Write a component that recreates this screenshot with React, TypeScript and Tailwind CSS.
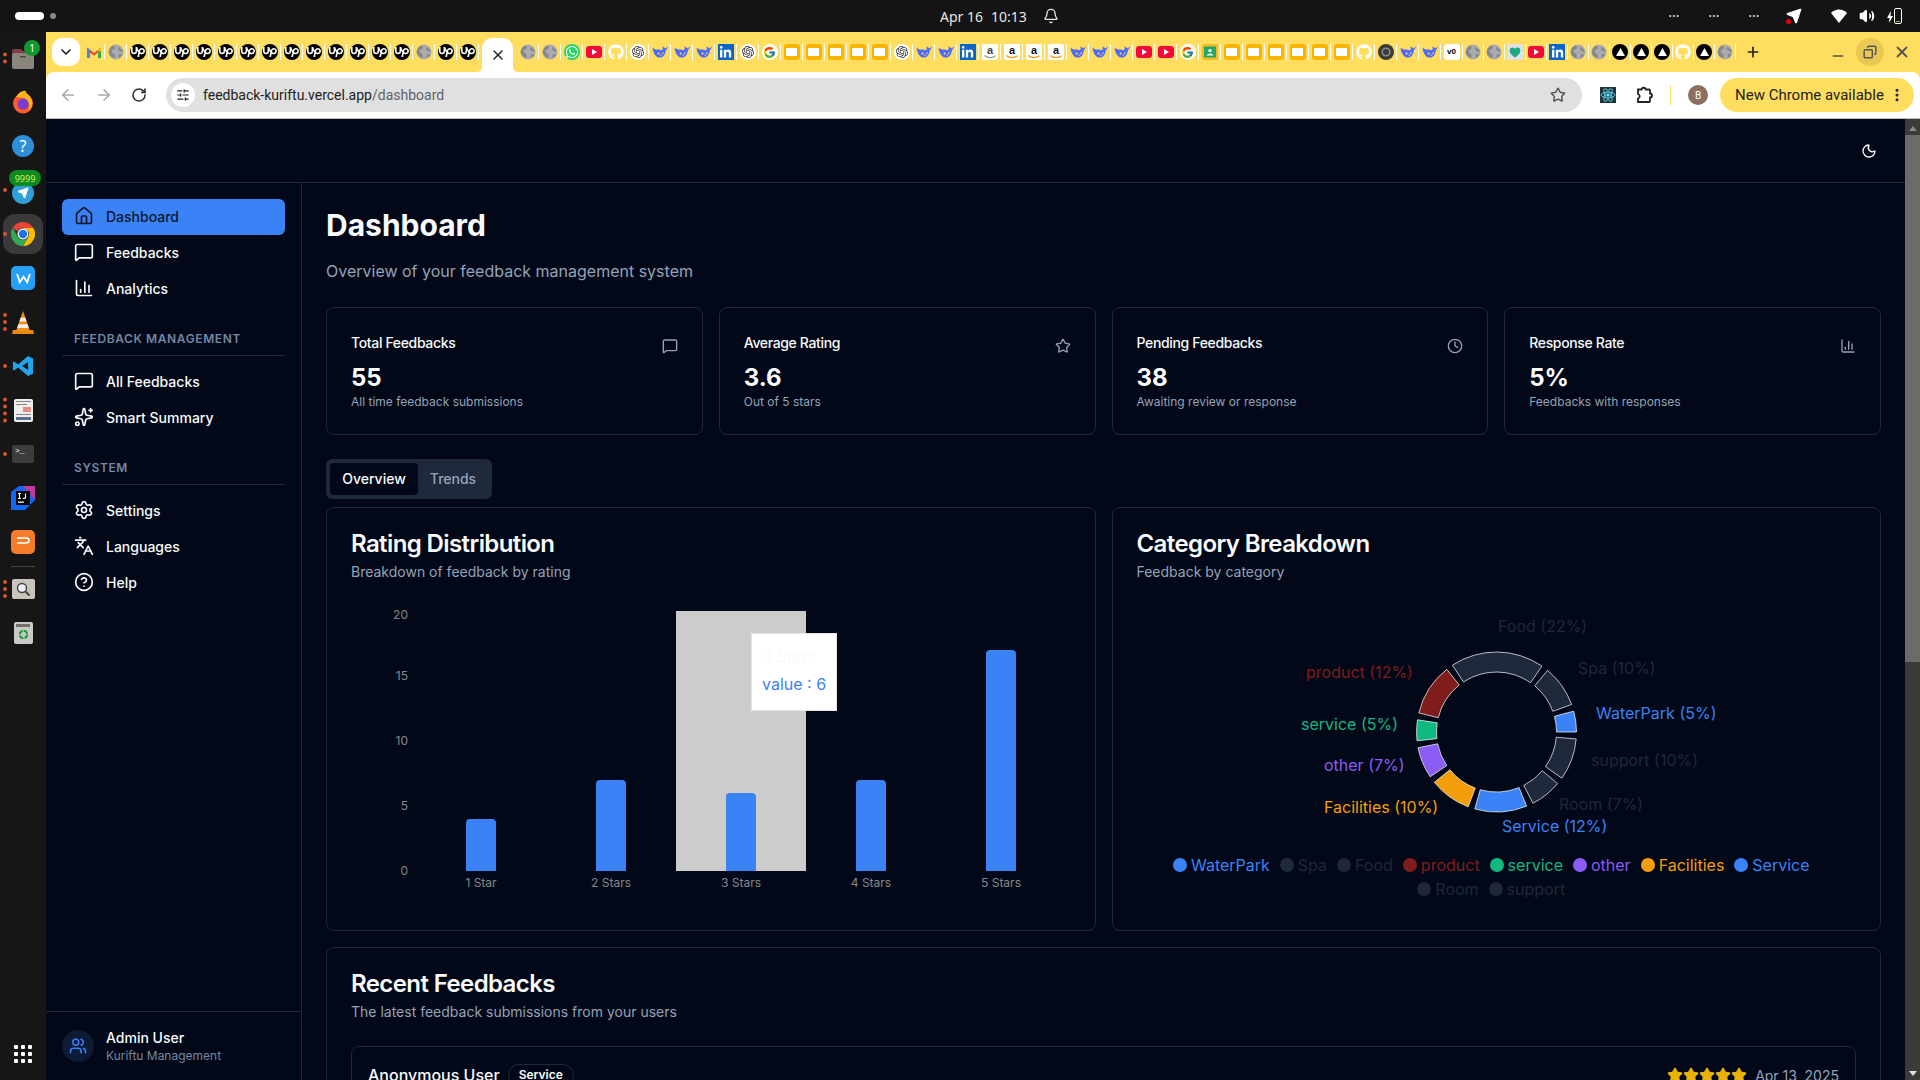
import React from 'react';
import {
  House, MessageSquare, ChartColumn, Sparkles, Settings, Languages, CircleHelp, Star, Clock, Users, Moon,
  ArrowLeft, ArrowRight, RotateCw, EllipsisVertical, Plus, Minus, X, ChevronDown, Bell, Volume2,
  Send, SlidersHorizontal, Copy,
} from 'lucide-react';
import { SiUpwork, SiOpenai } from 'react-icons/si';
import { FaWhatsapp, FaGithub, FaLinkedinIn } from 'react-icons/fa';
import { FcGoogle } from 'react-icons/fc';

type Fav = 'gmail' | 'globe' | 'up' | 'wa' | 'yt' | 'gh' | 'ai' | 'ds' | 'li' | 'g' | 'y' | 'am0' | 'am' | 'cl' | 'cd' | 'v0' | 'dash' | 'tri';

const rep = (k: Fav, n: number): Fav[] => Array.from({ length: n }, () => k);

const leftTabs: Fav[] = ['gmail', 'globe', ...rep('up', 13), 'globe', 'up', 'up'];
const rightTabs: Fav[] = [
  'globe', 'globe', 'wa', 'yt', 'gh', 'ai', ...rep('ds', 3), 'li', 'ai', 'g', ...rep('y', 5), 'ai', ...rep('ds', 2), 'li',
  'am0', 'am', 'am', 'am', ...rep('ds', 3), 'yt', 'yt', 'g', 'cl', ...rep('y', 6), 'gh', 'cd', 'ds', 'ds', 'v0', 'globe', 'globe',
  'dash', 'yt', 'li', 'globe', 'globe', 'tri', 'tri', 'tri', 'gh', 'tri', 'globe',
];

function Favicon({ kind }: { kind: Fav }) {
  switch (kind) {
    case 'gmail':
      return (
        <svg viewBox="0 0 16 16" className="h-4 w-4">
          <path d="M1 3.5 L8 9 L15 3.5 V6.5 L8 11.5 L1 6.5 Z" fill="#ea4335" />
          <path d="M1 3.5 V14 H4 V6 Z" fill="#4285f4" />
          <path d="M15 3.5 V14 H12 V6 Z" fill="#34a853" />
          <path d="M12 6 L15 3.5 V6.5 L12 8.5 Z" fill="#fbbc04" />
        </svg>
      );
    case 'globe':
      return (
        <svg viewBox="0 0 16 16" className="h-4 w-4">
          <circle cx="8" cy="8" r="7.5" fill="#a9abae" />
          <path d="M5 1.5 C8 3 7 5 5 5.5 S3 8 5 9.5 S7 11 6.5 14 C3 13 1 11 .7 8 C1 5 3 2.5 5 1.5Z M10 3 C12 3.5 14 5.5 15 8 C13 8 11 7 10 5Z M11 10 L14 10 C13.5 12 12 13.5 10.5 14 Z" fill="#84878b" />
        </svg>
      );
    case 'up':
      return (
        <span className="flex h-4 w-4 items-center justify-center rounded-full bg-black">
          <SiUpwork className="h-[14px] w-[14px] text-white" />
        </span>
      );
    case 'wa':
      return (
        <span className="flex h-4 w-4 items-center justify-center rounded-full bg-[#25d366]">
          <FaWhatsapp className="h-[14px] w-[14px] text-white" />
        </span>
      );
    case 'yt':
      return (
        <span className="flex h-3 w-4 items-center justify-center rounded-[3px] bg-[#f5083a]">
          <svg viewBox="0 0 6 6" className="h-[6px] w-[6px]"><path d="M1 0 L6 3 L1 6 Z" fill="#fff" /></svg>
        </span>
      );
    case 'gh':
      return <FaGithub className="h-4 w-4 text-white" />;
    case 'ai':
      return (
        <span className="flex h-4 w-4 items-center justify-center rounded-full bg-white">
          <SiOpenai className="h-3 w-3 text-[#333]" />
        </span>
      );
    case 'ds':
      return (
        <svg viewBox="0 0 16 16" className="h-4 w-4">
          <path d="M.5 3.5 C2 5 3.5 5.6 5.5 5.6 C7.5 5.6 8.8 6.6 10 6.2 C10.8 5 11 3.6 10.4 2.4 C11.6 2.6 12.6 3.4 13 4.4 C13.8 4.2 14.8 3.6 15.6 2.6 C15.6 4.2 14.8 5.6 13.8 6.2 C13.8 9.4 11.6 13.6 7.6 13.6 C3.6 13.6 1 9 .5 3.5 Z" fill="#4d6bfe" />
          <circle cx="6.6" cy="9.4" r="1" fill="#ffdd5e" />
          <path d="M8.5 11.5 C10 11 11 9.5 11.4 8" fill="none" stroke="#ffdd5e" strokeWidth=".9" />
        </svg>
      );
    case 'li':
      return (
        <span className="flex h-4 w-4 items-center justify-center bg-[#0a66c2]">
          <FaLinkedinIn className="h-[13px] w-[13px] text-white" />
        </span>
      );
    case 'g':
      return (
        <span className="flex h-4 w-4 items-center justify-center rounded-full bg-white">
          <FcGoogle className="h-[13px] w-[13px]" />
        </span>
      );
    case 'y':
      return (
        <span className="flex h-4 w-4 items-center justify-center rounded-[3px] bg-[#f9b400]">
          <span className="h-2 w-[11px] bg-white" />
        </span>
      );
    case 'am0':
    case 'am':
      return (
        <svg viewBox="0 0 16 16" className="h-4 w-4">
          <rect width="16" height="16" rx="2" fill="#fff" />
          <text x="8" y="10" textAnchor="middle" fontSize="11" fontWeight="700" fontFamily="Liberation Sans, sans-serif" fill={kind === 'am' ? '#111' : '#444'}>a</text>
          <path d="M2.5 11.5 C5.5 14.4 10.5 14.4 13.5 11.8" fill="none" stroke={kind === 'am' ? '#f79400' : '#999'} strokeWidth="1.3" />
        </svg>
      );
    case 'cl':
      return (
        <svg viewBox="0 0 16 16" className="h-4 w-4">
          <rect width="16" height="16" rx="2" fill="#f5bc1c" />
          <rect x="2" y="2.5" width="12" height="11" fill="#25a667" />
          <circle cx="8" cy="6.6" r="1.7" fill="#fff" />
          <path d="M4.8 11.5 C5 8.8 11 8.8 11.2 11.5 Z" fill="#fff" />
        </svg>
      );
    case 'cd':
      return (
        <svg viewBox="0 0 16 16" className="h-4 w-4">
          <circle cx="8" cy="8" r="8" fill="#3a3a3a" />
          <circle cx="8" cy="8" r="4.6" fill="#8a8a8a" />
          <circle cx="8" cy="8" r="3" fill="#3a3a3a" />
        </svg>
      );
    case 'v0':
      return (
        <span className="flex h-4 w-4 items-center justify-center rounded-[3px] bg-white font-['Liberation_Sans',sans-serif] text-[8px] font-bold leading-none text-black">v0</span>
      );
    case 'dash':
      return (
        <svg viewBox="0 0 16 16" className="h-4 w-4">
          <rect width="16" height="16" rx="2" fill="#dfe3e6" />
          <path d="M8 13.5 C3 10 2 7.5 3 5 C4.2 3 6.8 3 8 5 C9.2 3 11.8 3 13 5 C14 7.5 13 10 8 13.5 Z" fill="#1fa587" />
        </svg>
      );
    case 'tri':
      return (
        <span className="flex h-4 w-4 items-center justify-center rounded-full bg-black">
          <svg viewBox="0 0 10 9" className="h-[8px] w-[9px]"><path d="M5 0 L10 9 H0 Z" fill="#fff" /></svg>
        </span>
      );
  }
}

function TabCell({ kind, narrow }: { kind: Fav; narrow?: boolean }) {
  return (
    <div className={narrow ? 'flex h-4 w-[21px] shrink-0 items-center justify-center border-r border-white' : 'flex h-4 w-[22px] shrink-0 items-center justify-center border-r border-white'}>
      <Favicon kind={kind} />
    </div>
  );
}

function DockDots({ n }: { n: number }) {
  return (
    <span className="absolute left-[3px] top-1/2 flex -translate-y-1/2 flex-col gap-[3px]">
      {Array.from({ length: n }).map((_, i) => (
        <span key={i} className="h-[4px] w-[4px] rounded-full bg-[#d9532c]" />
      ))}
    </span>
  );
}

function DockCell({ dots = 0, children }: { dots?: number; children: React.ReactNode }) {
  return (
    <div className="relative flex h-11 w-full shrink-0 items-center justify-center">
      {dots > 0 && <DockDots n={dots} />}
      {children}
    </div>
  );
}

function Dock() {
  return (
    <aside className="flex w-[46px] shrink-0 flex-col bg-[#161616] pb-1 pt-1">
      <DockCell dots={2}>
        <svg viewBox="0 0 24 22" className="h-[22px] w-6">
          <path d="M1 4 a2 2 0 0 1 2-2 h7 l2 2 h9 a2 2 0 0 1 2 2 v3 H1Z" fill="#7c3f4a" />
          <rect x="1" y="6" width="22" height="16" rx="2" fill="#8b8580" />
          <rect x="9" y="9" width="6" height="1.5" rx=".7" fill="#4b4745" />
        </svg>
        <span className="absolute left-[24px] top-[4px] flex h-4 w-4 items-center justify-center rounded-full bg-[#12982c] font-['Noto_Sans',sans-serif] text-[10px] leading-none text-white">1</span>
      </DockCell>
      <DockCell>
        <svg viewBox="0 0 24 24" className="h-6 w-6">
          <circle cx="12" cy="13.5" r="10" fill="#ff5a2b" />
          <path d="M5 7 C8 2 12 0 15 1 C14 3 17 3 20 8 C22 12 22 18 17 21 C21 15 16 9 13 8 Z" fill="#ffb31a" />
          <circle cx="12" cy="14" r="5.5" fill="#7a3bd1" />
        </svg>
      </DockCell>
      <DockCell>
        <span className="flex h-[22px] w-[22px] items-center justify-center rounded-full bg-[#2e8fd8] font-['Noto_Sans',sans-serif] text-[16px] leading-none text-white">?</span>
      </DockCell>
      <DockCell dots={1}>
        <span className="mt-[6px] flex h-[22px] w-[22px] items-center justify-center rounded-full bg-[#2f9fd8]">
          <Send className="h-3 w-3 fill-white text-white" />
        </span>
        <span className="absolute left-[9px] top-[2px] flex h-4 w-8 items-center justify-center rounded-full bg-[#0f8a1f] font-['Noto_Sans',sans-serif] text-[9px] leading-none text-[#d6ee5a]">9999</span>
      </DockCell>
      <DockCell dots={1}>
        <span className="flex h-10 w-10 items-center justify-center rounded-xl bg-[#3a3a3a]">
          <svg viewBox="0 0 24 24" className="h-6 w-6">
            <path d="M12 0 A12 12 0 0 1 22.4 6 H12 A6 6 0 0 0 6.8 9 L1.6 6 A12 12 0 0 1 12 0Z" fill="#ea4335" />
            <path d="M22.4 6 A12 12 0 0 1 12 24 L17.2 15 A6 6 0 0 0 17.2 9 L12 6Z" fill="#fbbc04" />
            <path d="M1.6 6 A12 12 0 0 0 12 24 L17.2 15 A6 6 0 0 1 6.8 15Z" fill="#34a853" />
            <circle cx="12" cy="12" r="5.4" fill="#fff" />
            <circle cx="12" cy="12" r="4.2" fill="#1a73e8" />
          </svg>
        </span>
      </DockCell>
      <DockCell>
        <span className="flex h-6 w-6 items-center justify-center rounded-[5px] bg-[#25a0f5]">
          <svg viewBox="0 0 16 12" className="h-[11px] w-[15px]"><path d="M1 1 L4 10 L8 4 L12 10 L15 1" fill="none" stroke="#fff" strokeWidth="2" /></svg>
        </span>
      </DockCell>
      <DockCell dots={3}>
        <svg viewBox="0 0 22 24" className="h-6 w-[22px]">
          <path d="M1 20 L21 20 L22 24 H0Z" fill="#e98a12" />
          <path d="M11 1 L18 21 H4Z" fill="#f08f13" />
          <path d="M8.6 7.8 H13.4 L14.6 11.5 H7.4Z" fill="#eee" />
          <path d="M6.4 14.2 H15.6 L16.8 18 H5.2Z" fill="#eee" />
        </svg>
      </DockCell>
      <DockCell dots={1}>
        <svg viewBox="0 0 24 24" className="h-[22px] w-[22px]">
          <path d="M17.5 1 L23 3.7 V20.3 L17.5 23 L6.5 13.6 L2.4 17 L1 16 V8 L2.4 7 L6.5 10.4Z M17.5 7.6 L11 12 L17.5 16.4Z" fill="#23a3ea" fillRule="evenodd" />
        </svg>
      </DockCell>
      <DockCell dots={4}>
        <span className="flex h-[23px] w-[19px] flex-col gap-[2px] rounded-[2px] bg-[#eee] p-[2px]">
          <span className="h-px w-full bg-[#888]" />
          <span className="h-px w-3/4 bg-[#888]" />
          <span className="ml-auto h-[5px] w-1/2 bg-[#ea8d86]" />
          <span className="h-px w-full bg-[#888]" />
          <span className="h-[3px] w-full bg-[#5b6c8f]" />
        </span>
      </DockCell>
      <DockCell dots={1}>
        <span className="flex h-[18px] w-[22px] items-start rounded-[2px] bg-[#3c3c3c] pl-[3px] font-['Liberation_Mono',monospace] text-[8px] leading-[11px] text-white">&gt;_</span>
      </DockCell>
      <DockCell>
        <svg viewBox="0 0 24 24" className="h-6 w-6">
          <path d="M0 6 L8 0 H24 V14 L14 24 H0Z" fill="#1466f5" />
          <path d="M12 0 H24 V14 Z" fill="#c13a9d" />
          <rect x="5" y="5" width="14" height="14" fill="#000" />
          <rect x="7" y="15.5" width="6" height="1.3" fill="#fff" />
          <path d="M7 7.5 H10 M8.5 7.5 V12.5 M7 12.5 H10 M14.5 7.5 V11.5 Q14.5 12.5 12 12.5" stroke="#fff" strokeWidth="1.2" fill="none" />
        </svg>
      </DockCell>
      <DockCell>
        <span className="flex h-6 w-6 items-center justify-center rounded-[5px] bg-[#f57c2b]">
          <svg viewBox="0 0 14 10" className="h-[10px] w-[14px]"><path d="M1 1 H10 Q13 1 13 3.5 Q13 6 10 6 H1 M1 9" fill="none" stroke="#fff" strokeWidth="1.6" /></svg>
        </span>
      </DockCell>
      <div className="mx-auto h-[3px] w-6 shrink-0 border-b border-[#444]" />
      <DockCell dots={3}>
        <span className="flex h-5 w-[23px] items-center justify-center rounded-[2px] bg-[#c9c5bc]">
          <svg viewBox="0 0 16 16" className="h-4 w-4"><circle cx="7" cy="7" r="4.5" fill="#eef" stroke="#444" strokeWidth="1.4" /><path d="M10.5 10.5 L14.5 14.5" stroke="#444" strokeWidth="2" /></svg>
        </span>
      </DockCell>
      <DockCell>
        <span className="flex h-[22px] w-[19px] flex-col items-center rounded-[2px] bg-[#c8cac6] pt-[2px]">
          <span className="h-[3px] w-[14px] bg-[#6e6e6e]" />
          <svg viewBox="0 0 12 12" className="mt-[2px] h-[11px] w-[11px]"><circle cx="6" cy="6" r="4" fill="none" stroke="#1f9a3b" strokeWidth="2.2" strokeDasharray="5 1.2" /></svg>
        </span>
      </DockCell>
      <div className="relative mt-auto flex h-11 w-full shrink-0 items-center justify-center">
        <span className="grid grid-cols-3 gap-[3px]">
          {Array.from({ length: 9 }).map((_, i) => (
            <span key={i} className="h-[4px] w-[4px] rounded-[1px] bg-white" />
          ))}
        </span>
      </div>
    </aside>
  );
}

function TopBar() {
  return (
    <header className="flex h-8 shrink-0 items-center bg-[#141414] font-['Noto_Sans',sans-serif] text-[14px] text-[#e6e6e6]">
      <span className="ml-[15px] h-2 w-[29px] rounded-full bg-white" />
      <span className="ml-[6px] h-[6px] w-[6px] rounded-full bg-[#8a8a8a]" />
      <div className="ml-[884px] flex items-center">
        <span>Apr 16</span>
        <span className="ml-[8px]">10:13</span>
        <Bell className="ml-[16px] h-4 w-4" />
      </div>
      <div className="ml-auto flex items-center pr-[18px]">
        <span className="w-[40px] text-center leading-none">···</span>
        <span className="w-[40px] text-center leading-none">···</span>
        <span className="w-[40px] text-center leading-none">···</span>
        <span className="relative ml-[12px]">
          <Send className="h-4 w-4 fill-white text-white" />
          <span className="absolute bottom-0 left-0 h-[5px] w-[5px] rounded-full bg-red-600" />
        </span>
        <svg viewBox="0 0 16 14" className="ml-[29px] h-[14px] w-4"><path d="M0 4 C4 -.8 12 -.8 16 4 L8 14 Z" fill="#fff" /></svg>
        <Volume2 className="ml-[12px] h-4 w-4 fill-white text-white" />
        <span className="relative ml-[19px] flex h-[16px] w-[8px] items-end rounded-[2px] border border-white p-px">
          <span className="h-px w-full bg-[#66cc33]" />
          <svg viewBox="0 0 6 12" className="absolute -left-[8px] top-[2px] h-3 w-[6px]"><path d="M4 0 L0 7 H2.5 L2 12 L6 5 H3.5Z" fill="#fff" /></svg>
        </span>
      </div>
    </header>
  );
}

function TabBar() {
  return (
    <div className="flex h-10 shrink-0 items-center bg-[#ffdd5e]">
      <div className="ml-[6px] flex h-7 w-7 shrink-0 items-center justify-center rounded-[10px] bg-white">
        <ChevronDown className="h-4 w-4 text-[#222]" strokeWidth={2.5} />
      </div>
      <div className="ml-[3px] flex items-center">
        {leftTabs.map((k, i) => <TabCell key={i} kind={k} />)}
      </div>
      <div className="relative ml-[3px] flex h-[34px] w-[31px] shrink-0 items-center justify-center self-end rounded-t-[10px] bg-white">
        <X className="h-4 w-4 text-[#222]" strokeWidth={2.2} />
        <svg viewBox="0 0 6 6" className="absolute -left-[6px] bottom-0 h-[6px] w-[6px]"><path d="M6 0 V6 H0 Q6 6 6 0Z" fill="#fff" /></svg>
        <svg viewBox="0 0 6 6" className="absolute -right-[6px] bottom-0 h-[6px] w-[6px]"><path d="M0 0 V6 H6 Q0 6 0 0Z" fill="#fff" /></svg>
      </div>
      <div className="ml-[4px] flex items-center">
        {rightTabs.map((k, i) => <TabCell key={i} kind={k} narrow={i > 42} />)}
      </div>
      <Plus className="ml-[9px] h-4 w-4 text-[#222]" strokeWidth={2.5} />
      <div className="ml-auto flex items-center pr-[2px] text-[#555]">
        <div className="flex h-7 w-8 items-center justify-center"><Minus className="mt-[8px] h-4 w-4" strokeWidth={2.5} /></div>
        <div className="flex h-7 w-8 items-center justify-center">
          <span className="flex h-7 w-7 items-center justify-center rounded-full bg-[#e9c954]"><Copy className="h-[14px] w-[14px] -scale-x-100" strokeWidth={2.5} /></span>
        </div>
        <div className="flex h-7 w-8 items-center justify-center"><X className="h-[18px] w-[18px]" strokeWidth={2.5} /></div>
      </div>
    </div>
  );
}

function Toolbar() {
  return (
    <div className="bg-[#ffdd5e]">
      <div className="flex h-[47px] items-center rounded-t-[8px] border-b border-[#bdbdbd] bg-white font-['Roboto',sans-serif]">
        <ArrowLeft className="ml-[13px] h-[18px] w-[18px] text-[#a8a8a8]" />
        <ArrowRight className="ml-[18px] h-[18px] w-[18px] text-[#a8a8a8]" />
        <RotateCw className="ml-[18px] h-4 w-4 text-[#333]" strokeWidth={2.4} />
        <div className="ml-[19px] flex h-[34px] w-[1416px] shrink-0 items-center rounded-full bg-[#e0e0e0] pl-[5px] pr-[16px]">
          <span className="flex h-6 w-6 items-center justify-center rounded-full bg-white">
            <SlidersHorizontal className="h-[14px] w-[14px] text-[#222]" />
          </span>
          <span className="ml-[8px] text-[14px] text-[#222]">feedback-kuriftu.vercel.app<span className="text-[#5f6368]">/dashboard</span></span>
          <Star className="ml-auto h-4 w-4 text-[#555]" strokeWidth={2.2} />
        </div>
        <span className="ml-[18px] flex h-4 w-4 items-center justify-center bg-[#20333a]">
          <svg viewBox="0 0 16 16" className="h-4 w-4" fill="none" stroke="#61dafb" strokeWidth=".8">
            <ellipse cx="8" cy="8" rx="7" ry="2.8" />
            <ellipse cx="8" cy="8" rx="7" ry="2.8" transform="rotate(60 8 8)" />
            <ellipse cx="8" cy="8" rx="7" ry="2.8" transform="rotate(120 8 8)" />
            <circle cx="8" cy="8" r="1.3" fill="#61dafb" />
          </svg>
        </span>
        <svg viewBox="0 0 18 18" className="ml-[19px] h-[18px] w-[18px]" fill="none" stroke="#222" strokeWidth="1.8">
          <path d="M3 3.5 H6.5 A2.2 2.2 0 0 1 10.8 3.5 H14 A1 1 0 0 1 15 4.5 V7.5 A2 2 0 0 1 15 11.5 V15 A1 1 0 0 1 14 16 H3 V12.6 A2.4 2.4 0 0 0 3 8 Z" />
        </svg>
        <span className="ml-[17px] h-5 w-px bg-[#ffdd5e]" />
        <span className="ml-[17px] flex h-5 w-5 items-center justify-center rounded-full bg-[#8d6e63] text-[10px] text-white">B</span>
        <div className="ml-[12px] flex h-[34px] w-[194px] shrink-0 items-center rounded-full bg-[#ffdd5e] pl-[15px] text-[15px] text-[#222]">
          <span>New Chrome available</span>
          <EllipsisVertical className="ml-auto mr-[9px] h-4 w-4" strokeWidth={2.5} />
        </div>
      </div>
    </div>
  );
}

function NavItem({ icon: Icon, label, active }: { icon: React.ElementType; label: string; active?: boolean }) {
  return (
    <div className={active
      ? 'flex h-9 items-center gap-3 rounded-md bg-[#3b82f6] px-3 pb-[2px] text-[14px] font-medium text-[#0f172a]'
      : 'flex h-9 items-center gap-3 rounded-md px-3 pb-[2px] text-[14px] font-medium text-[#f8fafc]'}>
      <Icon className="h-5 w-5" />
      <span>{label}</span>
    </div>
  );
}

function NavLabel({ children }: { children: React.ReactNode }) {
  return (
    <div className="mt-[24px]">
      <div className="px-3 text-[12px] font-semibold uppercase leading-4 tracking-wider text-[#7387a3]">{children}</div>
      <div className="mb-2 mt-[8px] h-px bg-[#1e293b]" />
    </div>
  );
}

function Sidebar() {
  return (
    <aside className="flex w-[256px] shrink-0 flex-col border-r border-[#1e293b]">
      <nav className="flex flex-col px-4 pt-4">
        <NavItem icon={House} label="Dashboard" active />
        <NavItem icon={MessageSquare} label="Feedbacks" />
        <NavItem icon={ChartColumn} label="Analytics" />
        <NavLabel>Feedback Management</NavLabel>
        <NavItem icon={MessageSquare} label="All Feedbacks" />
        <NavItem icon={Sparkles} label="Smart Summary" />
        <NavLabel>System</NavLabel>
        <NavItem icon={Settings} label="Settings" />
        <NavItem icon={Languages} label="Languages" />
        <NavItem icon={CircleHelp} label="Help" />
      </nav>
      <div className="mt-auto flex h-[69px] items-start gap-3 border-t border-[#1e293b] px-4 pt-[18px]">
        <span className="flex h-8 w-8 items-center justify-center rounded-full bg-[#0d1b36]">
          <Users className="h-[18px] w-[18px] text-[#3b82f6]" />
        </span>
        <div className="-mt-[2px]">
          <div className="text-[14px] font-medium leading-5 text-[#f8fafc]">Admin User</div>
          <div className="text-[12px] leading-4 text-[#7387a3]">Kuriftu Management</div>
        </div>
      </div>
    </aside>
  );
}

function StatCard({ title, value, sub, icon: Icon }: { title: string; value: string; sub: string; icon: React.ElementType }) {
  return (
    <div className="rounded-lg border border-[#1e293b] p-6">
      <div className="flex h-[22px] items-start justify-between">
        <span className="mt-px text-[14px] font-medium leading-5 tracking-tight text-[#f8fafc]">{title}</span>
        <Icon className="mt-[6px] h-4 w-4 text-[#94a3b8]" />
      </div>
      <div className="mt-2 text-[24px] font-bold leading-8 text-[#f8fafc]">{value}</div>
      <div className="text-[12px] leading-4 text-[#94a3b8]">{sub}</div>
    </div>
  );
}

function ChartCard({ title, sub, children }: { title: string; sub: string; children: React.ReactNode }) {
  return (
    <div className="min-w-0 rounded-lg border border-[#1e293b] p-6">
      <h3 className="text-[24px] font-semibold leading-6 tracking-tight text-[#f8fafc]">{title}</h3>
      <p className="mt-[6px] text-[14px] leading-5 text-[#94a3b8]">{sub}</p>
      <div className="mt-6 h-[300px]">{children}</div>
    </div>
  );
}

const bars = [
  { label: '1 Star', cx: 130, v: 4 },
  { label: '2 Stars', cx: 260, v: 7 },
  { label: '3 Stars', cx: 390, v: 6 },
  { label: '4 Stars', cx: 520, v: 7 },
  { label: '5 Stars', cx: 650, v: 17 },
];

function BarChartView() {
  const base = 265;
  return (
    <div className="relative h-full w-full">
      <svg viewBox="0 0 720 300" className="block h-[300px] w-[720px]" fontFamily="Inter, sans-serif" fontSize="12">
        <rect x="325" y="5" width="130" height="260" fill="#cccccc" />
        {[['20', 8], ['15', 69], ['10', 134], ['5', 199], ['0', 264.5]].map(([t, y]) => (
          <text key={t as string} x="57" y={y as number} textAnchor="end" dominantBaseline="central" fill="#888888">{t}</text>
        ))}
        {bars.map((b) => {
          const h = b.v * 13;
          const x = b.cx - 15;
          const y = base - h;
          return (
            <g key={b.label}>
              <path d={`M${x} ${base} V${y + 4} Q${x} ${y} ${x + 4} ${y} H${x + 26} Q${x + 30} ${y} ${x + 30} ${y + 4} V${base} Z`} fill="#3b82f6" />
              <text x={b.cx} y="276" textAnchor="middle" dominantBaseline="central" fill="#888888">{b.label}</text>
            </g>
          );
        })}
      </svg>
      <div className="absolute left-[400px] top-[27px] h-[78px] w-[86px] border border-[#e5e5e5] bg-white px-[10px] pt-[10px] text-[16px] leading-6">
        <div className="text-[#f8fafc]">3 Stars</div>
        <div className="mt-1 whitespace-nowrap text-[#3b82f6]">value : 6</div>
      </div>
    </div>
  );
}

const slices = [
  { name: 'WaterPark', v: 2, color: '#3b82f6' },
  { name: 'Spa', v: 4, color: '#1e293b' },
  { name: 'Food', v: 9, color: '#1e293b' },
  { name: 'product', v: 5, color: '#7f1d1d' },
  { name: 'service', v: 2, color: '#10b981' },
  { name: 'other', v: 3, color: '#8b5cf6' },
  { name: 'Facilities', v: 4, color: '#f59e0b' },
  { name: 'Service', v: 5, color: '#3b82f6' },
  { name: 'Room', v: 3, color: '#1e293b' },
  { name: 'support', v: 4, color: '#1e293b' },
];

const pieLabels = [
  { t: 'Food (22%)', x: 361, y: 20, c: '#1e293b' },
  { t: 'Spa (10%)', x: 441, y: 62, c: '#1e293b' },
  { t: 'WaterPark (5%)', x: 459, y: 107, c: '#3b82f6' },
  { t: 'support (10%)', x: 454, y: 154, c: '#1e293b' },
  { t: 'Room (7%)', x: 422, y: 198, c: '#1e293b' },
  { t: 'Service (12%)', x: 365, y: 220, c: '#3b82f6' },
  { t: 'Facilities (10%)', x: 187, y: 201, c: '#f59e0b' },
  { t: 'other (7%)', x: 187, y: 159, c: '#8b5cf6' },
  { t: 'service (5%)', x: 164, y: 118, c: '#10b981' },
  { t: 'product (12%)', x: 169, y: 66, c: '#7f1d1d' },
];

function arc(start: number, end: number) {
  const cx = 359.5;
  const cy = 126;
  const R = 80;
  const r = 60;
  const p = (rad: number, a: number) => {
    const t = (a * Math.PI) / 180;
    return `${(cx + rad * Math.cos(t)).toFixed(2)} ${(cy - rad * Math.sin(t)).toFixed(2)}`;
  };
  const large = end - start > 180 ? 1 : 0;
  return `M${p(R, start)} A${R} ${R} 0 ${large} 0 ${p(R, end)} L${p(r, end)} A${r} ${r} 0 ${large} 1 ${p(r, start)} Z`;
}

function LegendItem({ name, color }: { name: string; color: string }) {
  return (
    <span className="flex items-center gap-1" style={{ color }}>
      <span className="h-[14px] w-[14px] rounded-full" style={{ backgroundColor: color }} />
      {name}
    </span>
  );
}

function PieChartView() {
  let angle = 0;
  const paths = slices.map((s) => {
    const sweep = (s.v / 41) * 310;
    const d = arc(angle, angle + sweep);
    angle += sweep + 5;
    return { d, color: s.color, name: s.name };
  });
  return (
    <div className="flex h-full w-full flex-col">
      <svg viewBox="0 0 720 247" className="block h-[247px] w-[720px] shrink-0" fontFamily="Inter, sans-serif" fontSize="16">
        {paths.map((p) => (
          <path key={p.name} d={p.d} fill={p.color} stroke="#ffffff" strokeOpacity="0.7" strokeWidth="1" />
        ))}
        {pieLabels.map((l) => (
          <text key={l.t} x={l.x} y={l.y} dominantBaseline="central" fill={l.c}>{l.t}</text>
        ))}
      </svg>
      <div className="flex h-6 items-center justify-center gap-[10px] pr-[10px] text-[16px] leading-6">
        {slices.slice(0, 8).map((s) => <LegendItem key={s.name} name={s.name} color={s.color} />)}
      </div>
      <div className="flex h-6 items-center justify-center gap-[10px] pr-[10px] text-[16px] leading-6">
        {slices.slice(8).map((s) => <LegendItem key={s.name} name={s.name} color={s.color} />)}
      </div>
    </div>
  );
}

function MainContent() {
  return (
    <main className="min-w-0 flex-1 overflow-hidden p-6">
      <h1 className="text-[30px] font-bold leading-9 text-[#f8fafc]">Dashboard</h1>
      <p className="mt-4 text-[16px] leading-6 text-[#94a3b8]">Overview of your feedback management system</p>
      <div className="mt-6 grid grid-cols-4 gap-4">
        <StatCard title="Total Feedbacks" value="55" sub="All time feedback submissions" icon={MessageSquare} />
        <StatCard title="Average Rating" value="3.6" sub="Out of 5 stars" icon={Star} />
        <StatCard title="Pending Feedbacks" value="38" sub="Awaiting review or response" icon={Clock} />
        <StatCard title="Response Rate" value="5%" sub="Feedbacks with responses" icon={ChartColumn} />
      </div>
      <div className="mt-6 flex h-10 w-[166px] items-center rounded-md bg-[#1e293b] p-1 text-[14px] font-medium">
        <span className="flex h-8 w-[88px] items-center justify-center rounded-sm bg-[#020817] pb-[2px] text-[#f8fafc]">Overview</span>
        <span className="flex h-8 flex-1 items-center justify-center pb-[2px] text-[#94a3b8]">Trends</span>
      </div>
      <div className="mt-2 grid grid-cols-2 gap-4">
        <ChartCard title="Rating Distribution" sub="Breakdown of feedback by rating"><BarChartView /></ChartCard>
        <ChartCard title="Category Breakdown" sub="Feedback by category"><PieChartView /></ChartCard>
      </div>
      <div className="mt-4 rounded-lg border border-[#1e293b] p-6">
        <h3 className="text-[24px] font-semibold leading-6 tracking-tight text-[#f8fafc]">Recent Feedbacks</h3>
        <p className="mt-[6px] text-[14px] leading-5 text-[#94a3b8]">The latest feedback submissions from your users</p>
        <div className="mt-6 rounded-lg border border-[#1e293b] p-4">
          <div className="flex items-center justify-between">
            <div className="flex items-center gap-2">
              <span className="text-[16px] font-medium text-[#f8fafc]">Anonymous User</span>
              <span className="rounded-full border border-[#1e293b] px-[10px] py-[2px] text-[12px] font-semibold leading-4 text-[#f8fafc]">Service</span>
            </div>
            <div className="flex items-center gap-2">
              <div className="flex">
                {[0, 1, 2, 3, 4].map((i) => <Star key={i} className="h-4 w-4 fill-[#eab308] text-[#eab308]" />)}
              </div>
              <span className="text-[14px] text-[#94a3b8]">Apr 13, 2025</span>
            </div>
          </div>
        </div>
      </div>
    </main>
  );
}

function Scrollbar() {
  return (
    <div className="flex w-[15px] shrink-0 flex-col items-center bg-[#3b3b3b]">
      <svg viewBox="0 0 8 5" className="mt-[7px] h-[5px] w-2"><path d="M4 0 L8 5 H0Z" fill="#8a8a8a" /></svg>
      <div className="mt-[4px] h-[527px] w-full bg-[#6b6b6b]" />
      <svg viewBox="0 0 8 5" className="mb-[4px] mt-auto h-[5px] w-2"><path d="M0 0 H8 L4 5Z" fill="#e0e0e0" /></svg>
    </div>
  );
}

export default function App() {
  return (
    <div className="flex h-[1080px] w-[1920px] flex-col overflow-hidden bg-[#161616] font-['Inter',sans-serif]">
      <TopBar />
      <div className="flex min-h-0 flex-1">
        <Dock />
        <div className="flex min-w-0 flex-1 flex-col">
          <TabBar />
          <Toolbar />
          <div className="flex min-h-0 flex-1 bg-[#020817]">
            <div className="flex min-w-0 flex-1 flex-col">
              <div className="flex h-16 shrink-0 items-center justify-end border-b border-[#1e293b] pr-[28px]">
                <Moon className="h-4 w-4 text-[#f8fafc]" />
              </div>
              <div className="flex min-h-0 flex-1">
                <Sidebar />
                <MainContent />
              </div>
            </div>
            <Scrollbar />
          </div>
        </div>
      </div>
    </div>
  );
}
